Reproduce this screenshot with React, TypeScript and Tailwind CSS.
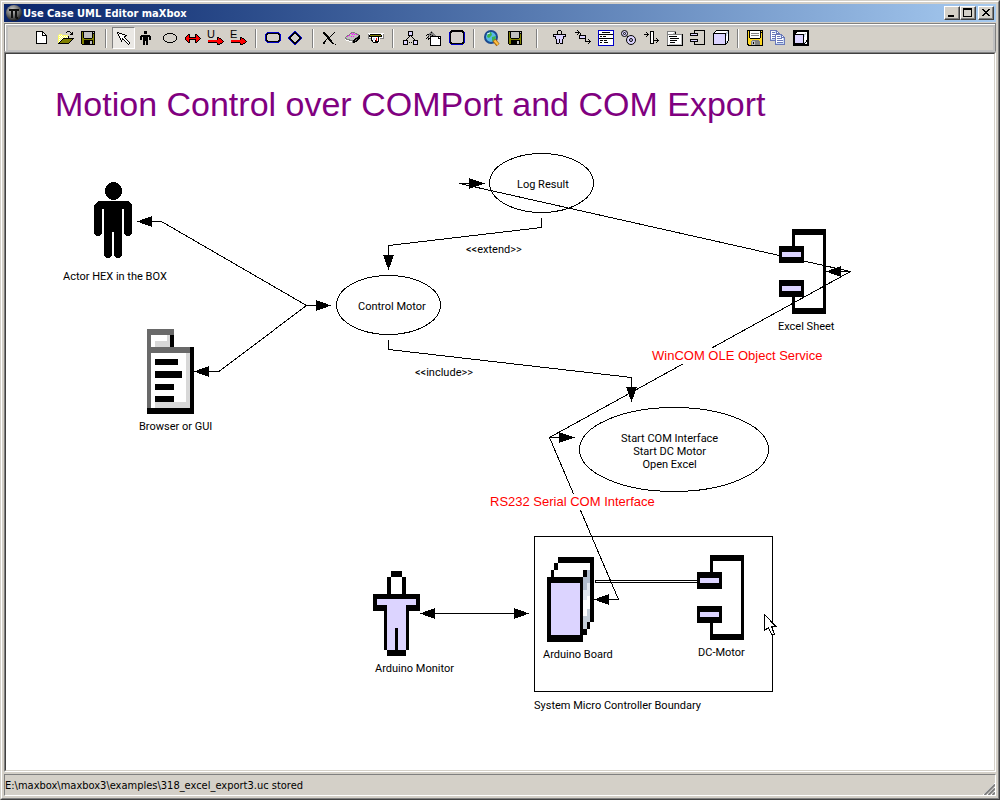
import React from "react";

const COLORS: Record<string, string> = {
  K: "#000000",
  W: "#ffffff",
  O: "#808000",
  Y: "#ffff66",
  G: "#c0c0c0",
  D: "#808080",
  R: "#ff0000",
  B: "#0000c8",
  L: "#dcd4ff",
  M: "#ff00ff",
  S: "#ffd820",
  P: "#6a78b8",
  C: "#c4d8f4",
};

/* Draws a bitmap given as rows of colour letters; dots are transparent. */
function Bitmap({ rows, x = 0, y = 0 }: { rows: string[]; x?: number; y?: number }) {
  const cells: React.ReactNode[] = [];
  rows.forEach((row, r) => {
    let c = 0;
    while (c < row.length) {
      let end = c + 1;
      while (end < row.length && row[end] === row[c]) end++;
      const fill = COLORS[row[c]];
      if (fill) {
        cells.push(<rect key={`${r}-${c}`} x={x + c} y={y + r} width={end - c} height={1} fill={fill} />);
      }
      c = end;
    }
  });
  return <>{cells}</>;
}

const NEW = [
  "KKKKKKK....",
  "KWWWWWKK...",
  "KWWWWWKWK..",
  "KWWWWWKWWK.",
  "KWWWWWKKKKK",
  "KWWWWWWWWWK",
  "KWWWWWWWWWK",
  "KWWWWWWWWWK",
  "KWWWWWWWWWK",
  "KWWWWWWWWWK",
  "KWWWWWWWWWK",
  "KWWWWWWWWWK",
  "KKKKKKKKKKK",
];
const OPEN = [
  ".........KKK....",
  "........K...K.K.",
  ".............KK.",
  ".YYY........KKK.",
  "YWYWYYYYYY......",
  "YYWYWYWYWYK.....",
  "YWYWYWYWYWK.....",
  "YYWYWKKKKKKKKKKK",
  "YWYWKOOOOOOOOOK.",
  "YYWKOOOOOOOOOK..",
  "YWKOOOOOOOOOK...",
  "YKOOOOOOOOOK....",
  "KKKKKKKKKKK.....",
];
const SAVE = [
  "KKKKKKKKKKKKKK",
  "KOKGGGGGGGGKGK",
  "KOKGGGGGGGGKKK",
  "KOKGGGGGGGGKOK",
  "KOKGGGGGGGGKOK",
  "KOKGGGGGGGGKOK",
  "KOKGGGGGGGGKOK",
  "KOOKKKKKKKKOOK",
  "KOOOOOOOOOOOOK",
  "KOOKKKKKKKKKOK",
  "KOOKKKKKKGGKOK",
  "KOOKKKKKKGGKOK",
  "KOOKKKKKKGGKOK",
  ".KKKKKKKKKKKKK",
];
const POINTER = [
  "KK............",
  "KWKKK.........",
  ".KWWWKKK......",
  ".KWWWWWWKK....",
  "..KWWWWKK.....",
  "..KWWWWK......",
  "...KWKWWK.....",
  "...KWKKWWK....",
  "....K..KWWK...",
  "....K...KWWK..",
  ".........KWWK.",
  "..........KWK.",
  "...........K..",
];
const ACTOR = [
  "....KKK....",
  "....KKK....",
  "....KKK....",
  "...........",
  ".KKKKKKKKK.",
  "KKKKKKKKKKK",
  "KK.KKKKK.KK",
  "KK.KKKKK.KK",
  "KK.KKKKK.KK",
  "...KKKKK...",
  "...KK.KK...",
  "...KK.KK...",
  "...KK.KK...",
  "...KK.KK...",
];
const BOTH = [
  "...KK.....KK....",
  "..KRK.....KRK...",
  ".KRRK.....KRRK..",
  "KRRRKKKKKKKRRRK.",
  "KRRRRRRRRRRRRRRK",
  "KRRRKKKKKKKRRRK.",
  ".KRRK.....KRRK..",
  "..KRK.....KRK...",
  "...KK.....KK....",
];
const RED = [
  ".........KK.....",
  ".........KRKK...",
  ".........KRRRK..",
  "RRRRRRRRRRRRRRK.",
  "RRRRRRRRRRRRRRRK",
  "KKKKKKKKKRRRRRK.",
  ".........KRRKK..",
  ".........KKK....",
];
const ROUND = [
  "..BBBBBBBBBBBB..",
  ".BKKKKKKKKKKKKB.",
  "BKK..........KKB",
  "BK............KB",
  "BK............KB",
  "BK............KB",
  "BK............KB",
  "BK............KB",
  "BKK..........KKB",
  ".BKKKKKKKKKKKKB.",
  "..BBBBBBBBBBBB..",
];
const SQUARE = [
  "..KKKKKKKKKKKK..",
  ".KKKKKKKKKKKKKK.",
  "BKK..........KKB",
  "BK............KB",
  "BK............KB",
  "BK............KB",
  "BK............KB",
  "BK............KB",
  "BK............KB",
  "BK............KB",
  "BK............KB",
  "BK............KB",
  "BKK..........KKB",
  ".KKKKKKKKKKKKKK.",
  "..BBBBBBBBBBBB..",
];
const DIAMOND = [
  "......BB......",
  ".....BKKB.....",
  "....BKKKKB....",
  "...BKK..KKB...",
  "..BKK....KKB..",
  ".BKK......KKB.",
  "BKK........KKB",
  "BKK........KKB",
  ".BKK......KKB.",
  "..BKK....KKB..",
  "...BKK..KKB...",
  "....BKKKKB....",
  ".....BKKB.....",
  "......BB......",
];
const CROSS = [
  "KK.........K.",
  "KKK.......K..",
  ".KKK.....K...",
  "..KKK...K....",
  "...KKK.K.....",
  "....KKK......",
  "....KKK......",
  "...K.KKK.....",
  "..K...KKK....",
  ".KK....KK....",
  "KK......KK...",
  "KK.......KK..",
  "............K",
];
const ERASER = [
  "......DDDD......",
  ".....DMGMGDDG...",
  "....DGGMGMGMDD..",
  "..DDMGGGGGGGGDK.",
  ".DMGGGMGMGGGGKK.",
  "DGGGGGGGGGGDKKK.",
  "DDGGGGGGGGKKKKK.",
  "WDDDDGGGGKKDKK..",
  ".WWWDDDDKKDKK...",
  "....WWWDKKKK....",
  ".......DKK......",
];
const PRINTER = [
  "WWWWWWWWWWWWWWWW",
  "DWKKKKKKKKKKKWWD",
  "DKOOOOOOOOOOOKWD",
  "DKKKKKKKKKKKKKWD",
  "DWWKWWWWWWKWWWWD",
  "DDDKWCCWRWKWDDDD",
  "...KWCCWRWKW....",
  "...KKWWKRWKW....",
  "....KWWKKKKW....",
  ".....KKKKKW.....",
];
const TREE = [
  ".....KKKKK.....",
  ".....KLLLK.....",
  ".....KLLLK.....",
  ".....KLLLK.....",
  ".....KKKKK.....",
  "......K.K......",
  ".....K...K.....",
  "....K.....K....",
  "...K.......K...",
  "KKKKK.....KKKKK",
  "KLLLK.....KLLLK",
  "KLLLK.K.K.KLLLK",
  "KLLLK.....KLLLK",
  "KKKKK.....KKKKK",
];
const SHEET = [
  ".....D.........",
  "....DKD........",
  "...DDDDD.......",
  ".KKDKDDDD......",
  "K.DDDDKDDD.....",
  "..K.KKKKKKKKKKK",
  ".KD.KWWWWWWWKWK",
  "K.KKKWWWWWWWKKK",
  "..K.KWWWWWWWWWK",
  "....KWWWWWWWWWK",
  "....KWWWWWWWWWK",
  "....KWWWWWWWWWK",
  "....KWWWWWWWWWK",
  "....KWWWWWWWWWK",
  "....KKKKKKKKKKK",
];
const FIGURE = [
  ".....KKK.....",
  "....K...K....",
  "....K...K....",
  "....K...K....",
  "KKKKKKKKKKKKK",
  "KLLLLLLLLLLLK",
  "KKKLLLLLLLKKK",
  "..KLLLLLLLK..",
  "..KLLLLLLLK..",
  "...KLLKLLK...",
  "...KLLKLLK...",
  "...KLLKLLK...",
  "...KLLKLLK...",
  "...KKK.KKK...",
];
const FLOW = [
  "..K.............",
  "...K............",
  "KKKKK...........",
  "...K.K..........",
  "..K..K..........",
  "....KKKKKKK.....",
  "....KLLLLLK.....",
  "....KLLLLLK.....",
  "....KKKKKKK.....",
  "..........K..K..",
  "..........K...K.",
  "..........KKKKKK",
  "..............K.",
  ".............K..",
];
const FORM = [
  "BBBBBBBBBBBBBBBB",
  "BWWWWWWWWWWWWWWB",
  "BWWWKKKKKKKKWWWB",
  "BWWWWWWWWWWWWWWB",
  "BKKKKKKKKKKKKKKB",
  "BWWWWWWWWWWWWWWB",
  "BWKKWKKKWWWWWWWB",
  "BWWWWWWWWWWWWWWB",
  "BKKKKKKKKKKKKKKB",
  "BWWWWWWWWWWWWWWB",
  "BWKKKWKKKWWWWWWB",
  "BWWWWWWWWWWWWWWB",
  "BWKKWWKKKKWWWWWB",
  "BWWWWWWWWWWWWWWB",
  "BWWWWWWWWWWWWWWB",
  "BBBBBBBBBBBBBBBB",
];
const BRIDGE = [
  "......KKKK......",
  "..K...KWWK......",
  "...K..KWWK......",
  "KKKKK.KWWK......",
  "...K..KWWK......",
  "..K...KWWK......",
  "......KWWK......",
  "......KWWK..K...",
  "......KWWK...K..",
  "......KWWKKKKKK.",
  "......KWWK...K..",
  "......KWWK..K...",
  "......KKKK......",
];
const PACKAGE = [
  "DDDDDDDDD.......",
  "DWWWWWWGK.......",
  "DWWWWWGGK.......",
  "DDDDDDDDDDDDDDDK",
  "DWWWWWWWWWWWWWGK",
  "DWKKKKKKKKWWWWGK",
  "DWWWWWWWWWWWWWGK",
  "DWWKKKKKKKKKWWGK",
  "DWWWWWWWWWWWWWGK",
  "DWWKKKKKKKWWWWGK",
  "DWWWWWWWWWWWWWGK",
  "DWWKKKKKWWWWWWGK",
  "DWWWWWWWWWWWWWGK",
  "DWGGGGGGGGGGGGGK",
  "KKKKKKKKKKKKKKKK",
];
const COMPONENT = [
  "....KKKKKKKKKKK",
  "....K.........K",
  "....K.........K",
  "KKKKKKKK......K",
  "KLLLLLLK......K",
  "KKKKKKKK......K",
  "..............K",
  "..............K",
  "..............K",
  "KKKKKKKK......K",
  "KLLLLLLK......K",
  "KKKKKKKK......K",
  "....K.........K",
  "....K.........K",
  "....KKKKKKKKKKK",
];
const CUBE = [
  "...KKKKKKKKKKKKK",
  "..KWWWWWWWWWWWGK",
  ".KWWWWWWWWWWWGCK",
  "KKKKKKKKKKKKKGCK",
  "KLLLLLLLLLLLKCWK",
  "KLLLLLLLLLLLKCWK",
  "KLLLLLLLLLLLKWWK",
  "KLLLLLLLLLLLKWWK",
  "KLLLLLLLLLLLKWWK",
  "KLLLLLLLLLLLKWWK",
  "KLLLLLLLLLLLKWWK",
  "KLLLLLLLLLLLKCK.",
  "KLLLLLLLLLLLKCK.",
  "KLLLLLLLLLLLKK..",
  "KKKKKKKKKKKKK...",
];
const DARK_CUBE = [
  "KKKKKKKKKKKKKKKK",
  "KKKKKKKKKKKKKKKK",
  "KKKKWWWWWWWWWWKK",
  "KKKWWWWWWWWWGWKK",
  "KKKKKKKKKKKGCWKK",
  "KKLLLLLLLLKCWWKK",
  "KKLLLLLLLLKCWWKK",
  "KKLLLLLLLLKWWWKK",
  "KKLLLLLLLLKWWWKK",
  "KKLLLLLLLLKWWWKK",
  "KKLLLLLLLLKWWKKK",
  "KKLLLLLLLLKWWKKK",
  "KKLLLLLLLLKCKWKK",
  "KKKKKKKKKKKKWWKK",
  "KKKKKKKKKKKKKKKK",
  "KKKKKKKKKKKKKKKK",
];
const FLOPPY = [
  "KKKKKKKKKKKKKKKK",
  "KSKWWWWWWWWWWKSK",
  "KSKWWWWWWWWWWKKK",
  "KSKWDDDDDDDDWKSK",
  "KSKWWWWWWWWWWKSK",
  "KSKWDDDDDDDDWKSK",
  "KSKWWWWWWWWWWKSK",
  "KSKWWWWWWWWWWKSK",
  "KSSKKKKKKKKKKSSK",
  "KSSSSSSSSSSSSSSK",
  "KSSSSDDDDDDDSSSK",
  "KSSSDGGGDDDDDSSK",
  "KSSSDGKGDDDDDSSK",
  "KSSSDGKGDDDDDSSK",
  "KKSSDGGGDDDDDSSK",
  ".KKKKKKKKKKKKKKK",
];
const COPY = [
  "PPPPPPP.........",
  "PWWWWCPP........",
  "PWPPPCPWP.......",
  "PWWWWWPPPP......",
  "PWPPPPPPPPPP....",
  "PWWWWPWWWWCPP...",
  "PWPPPPWPPPCPWP..",
  "PWWWWPWWWWWPPPP.",
  "PWPPPPWPPPPPWCP.",
  "PCCCCPWWWWWWWCP.",
  "PPPPPPWPPPPPPCP.",
  ".....PWWWWWWWCP.",
  ".....PWPPPPPPCP.",
  ".....PCCCCCCCCP.",
  ".....PPPPPPPPPP.",
];

const LETTER = "font-['Liberation_Sans',sans-serif] text-[11px]";

type Item = { label: string; art: React.ReactNode; pressed?: boolean };

const GROUPS: { gap: string; items: Item[] }[] = [
  {
    gap: "w-3",
    items: [
      { label: "New", art: <Bitmap rows={NEW} x={1} y={1} /> },
      { label: "Open", art: <Bitmap rows={OPEN} x={0} y={1} /> },
      { label: "Save", art: <Bitmap rows={SAVE} x={0} y={1} /> },
    ],
  },
  {
    gap: "w-[11px]",
    items: [
      { label: "Select", art: <Bitmap rows={POINTER} x={1} y={2} />, pressed: true },
      { label: "Actor", art: <Bitmap rows={ACTOR} x={1} y={1} /> },
      {
        label: "Use case",
        art: <ellipse cx={8} cy={8} rx={6.5} ry={4.5} fill="none" stroke="#000" />,
      },
      { label: "Association", art: <Bitmap rows={BOTH} x={0} y={4} /> },
      {
        label: "Uses",
        art: (
          <>
            <text x={-1} y={8} className={LETTER}>U</text>
            <Bitmap rows={RED} x={0} y={7} />
          </>
        ),
      },
      {
        label: "Extends",
        art: (
          <>
            <text x={-1} y={8} className={LETTER}>E</text>
            <Bitmap rows={RED} x={0} y={7} />
          </>
        ),
      },
    ],
  },
  {
    gap: "w-[11px]",
    items: [
      { label: "State", art: <Bitmap rows={ROUND} x={0} y={2} /> },
      { label: "Decision", art: <Bitmap rows={DIAMOND} x={0} y={1} /> },
    ],
  },
  {
    gap: "w-3",
    items: [
      { label: "Delete", art: <Bitmap rows={CROSS} x={1} y={2} /> },
      { label: "Erase", art: <Bitmap rows={ERASER} x={0} y={2} /> },
      { label: "Print", art: <Bitmap rows={PRINTER} x={0} y={3} /> },
    ],
  },
  {
    gap: "w-3",
    items: [
      { label: "Hierarchy", art: <Bitmap rows={TREE} x={0} y={1} /> },
      { label: "Properties", art: <Bitmap rows={SHEET} x={0} y={1} /> },
      { label: "Boundary", art: <Bitmap rows={SQUARE} x={0} y={0} /> },
    ],
  },
  {
    gap: "w-[22px]",
    items: [
      {
        label: "Browse",
        art: (
          <g shapeRendering="auto">
            <circle cx={7} cy={7} r={6} fill="#58b8e8" stroke="#1c4a90" strokeWidth={2} />
            <path d="M4 3l3-1 1 3-3 3-2-1zM8 7l4-1-1 4-3 1z" fill="#3cb44c" />
            <path d="M3 4l3-1" stroke="#d8f4ff" />
            <path d="M10 10l4 5" stroke="#a86810" strokeWidth={4} />
            <path d="M10.500 10.500l3.500 4" stroke="#ffc040" strokeWidth={2} />
          </g>
        ),
      },
      { label: "Save diagram", art: <Bitmap rows={SAVE} x={1} y={1} /> },
    ],
  },
  {
    gap: "w-[11px]",
    items: [
      { label: "Interface", art: <Bitmap rows={FIGURE} x={1} y={0} /> },
      { label: "Flow", art: <Bitmap rows={FLOW} x={0} y={0} /> },
      { label: "Class", art: <Bitmap rows={FORM} x={0} y={0} /> },
      {
        label: "Collaboration",
        art: (
          <g shapeRendering="auto" stroke="#000" fill="#dcd4ff">
            <circle cx={3.5} cy={3.5} r={3} />
            <circle cx={3.5} cy={3.5} r={1} />
            <path d="M6 6l2 2" />
            <circle cx={10} cy={10} r={4.5} />
            <circle cx={10} cy={10} r={1.5} />
          </g>
        ),
      },
      { label: "Sequence", art: <Bitmap rows={BRIDGE} x={0} y={1} /> },
      { label: "Package", art: <Bitmap rows={PACKAGE} x={0} y={1} /> },
      { label: "Component", art: <Bitmap rows={COMPONENT} x={0} y={0} /> },
      { label: "Node", art: <Bitmap rows={CUBE} x={0} y={0} /> },
    ],
  },
  {
    gap: "",
    items: [
      { label: "Save as", art: <Bitmap rows={FLOPPY} x={0} y={0} /> },
      { label: "Copy", art: <Bitmap rows={COPY} x={0} y={0} /> },
      { label: "Deployment", art: <Bitmap rows={DARK_CUBE} x={0} y={0} /> },
    ],
  },
];

function ToolButton({ item }: { item: Item }) {
  const base = "flex h-[22px] w-[23px] items-center pl-[3px] border";
  const look = item.pressed
    ? "border-t-[#808080] border-l-[#808080] border-r-white border-b-white bg-[#eae8e4]"
    : "border-transparent";
  return (
    <button type="button" aria-label={item.label} aria-pressed={item.pressed} className={`${base} ${look}`}>
      <svg width={16} height={16} viewBox="0 0 16 16" shapeRendering="crispEdges" className="shrink-0 overflow-visible">
        {item.art}
      </svg>
    </button>
  );
}

function Toolbar() {
  return (
    <div className="border border-[#808080] border-b-[#c0c0c0]">
      <div className="border-t border-l border-white">
        <div className="border-x-2 border-t-2 border-b border-[#c0c0c0]">
          <div role="toolbar" className="flex h-[23px] pl-[23px]">
            {GROUPS.map((group, i) => (
              <div key={i} className="flex">
                {group.items.map((item) => (
                  <ToolButton key={item.label} item={item} />
                ))}
                {group.gap && (
                  <div className={`flex justify-center py-[2px] ${group.gap}`}>
                    <div className="w-[2px] border-r border-l border-r-white border-l-[#808080]" />
                  </div>
                )}
              </div>
            ))}
          </div>
        </div>
      </div>
    </div>
  );
}

function CaptionButton({ label, children }: { label: string; children: React.ReactNode }) {
  return (
    <button
      type="button"
      aria-label={label}
      className="h-[14px] w-4 border border-t-white border-l-white border-r-[#404040] border-b-[#404040] bg-[#d4d0c8]"
    >
      <span className="flex h-full border-r border-b border-[#808080]">
        <svg width={13} height={11} viewBox="0 0 13 11" shapeRendering="crispEdges">
          {children}
        </svg>
      </span>
    </button>
  );
}

function TitleBar() {
  return (
    <header className="flex h-[18px] items-center bg-linear-to-r from-[#0a246a] to-[#a6caf0] px-[2px]">
      <svg width={16} height={16} viewBox="0 0 16 16">
        <defs>
          <radialGradient id="orb" cx="0.4" cy="0.3" r="0.7">
            <stop offset="0" stopColor="#c8c8c8" />
            <stop offset="0.6" stopColor="#686868" />
            <stop offset="1" stopColor="#202020" />
          </radialGradient>
        </defs>
        <circle cx={8} cy={8} r={8} fill="url(#orb)" />
        <path d="M3 5h10M6 5v8M10 5v7q0 1 2 1" fill="none" stroke="#101010" strokeWidth={2} />
      </svg>
      <h1 className="ml-px flex-1 pt-px font-['DejaVu_Sans_Condensed','DejaVu_Sans',sans-serif] text-[11px] leading-[17px] font-bold whitespace-nowrap text-white">
        Use Case UML Editor maXbox
      </h1>
      <div className="flex">
        <CaptionButton label="Minimize">
          <rect x={3} y={8} width={6} height={2} />
        </CaptionButton>
        <CaptionButton label="Maximize">
          <path d="M2 1h9v9h-9zM3 3v6h7v-6z" fillRule="evenodd" />
        </CaptionButton>
        <span className="w-[2px]" />
        <CaptionButton label="Close">
          <Bitmap
            x={3}
            y={2}
            rows={["KK....KK", ".KK..KK.", "..KKKK..", "...KK...", "..KKKK..", ".KK..KK.", "KK....KK"]}
          />
        </CaptionButton>
      </div>
    </header>
  );
}

function ComponentSymbol({ dx = 0, dy = 0 }: { dx?: number; dy?: number }) {
  return (
    <g transform={`translate(${dx} ${dy})`}>
      <path d="M792 229h34v85h-34v-20h3v14h28v-73h-28v14h-3z" />
      <path d="M779 246h25v17h-25zM779 280h25v17h-25z" />
      <path d="M782 252h19v5h-19zM782 286h19v5h-19z" fill="#dcd4ff" />
    </g>
  );
}

function Drawing() {
  return (
    <svg
      width={988}
      height={716}
      viewBox="6 54 988 716"
      shapeRendering="crispEdges"
      className="absolute top-0 left-0"
      aria-hidden="true"
    >
      <g fill="none" stroke="#000">
        <rect x={534.5} y={536.5} width={238} height={155} />
        <ellipse cx={541.5} cy={183} rx={52} ry={29.5} />
        <ellipse cx={388.5} cy={305} rx={52} ry={29.5} />
        <ellipse cx={674} cy={449.5} rx={94.5} ry={42} />
        <path d="M137 221.500H161.500L306.500 305.500H331" />
        <path d="M306.500 305.500L219 371.500H194" />
        <path d="M541.500 218V227.500L388.500 245.500V270" />
        <path d="M388.500 340V349.500L631.500 377.500V402" />
        <path d="M485 183.500H459.500L850.500 271.500H826" />
        <path d="M850.500 271.500L549.500 437.500H575" />
        <path d="M549.500 437.500L618.500 599.500H594" />
        <path d="M420 613.500H529" />
        <path d="M698 580.500H595.500V582.500H698" />
      </g>

      <g>
        <path d="M137 221.500L152 216V227z" />
        <path d="M331 305.500L316 300V311z" />
        <path d="M194 371.500L209 366V377z" />
        <path d="M388.500 270L383 255H394z" />
        <path d="M631.500 402L626 387H637z" />
        <path d="M485 183.500L469 178V189z" />
        <path d="M826 271.500L841 266V277z" />
        <path d="M575 437.500L559 432V443z" />
        <path d="M594 599.500L609 594V605z" />
        <path d="M420 613.500L435 608V619z" />
        <path d="M529 613.500L514 608V619z" />
      </g>

      <g>
        <ellipse cx={113.5} cy={191} rx={8.5} ry={9} />
        <path d="M98 201H128L132 205V233L130 236H126L124 233V209H122V255L120 258H116L114 255V232H112V255L110 258H106L104 255V209H102V233L100 236H96L94 233V205z" />
      </g>

      <g>
        <path d="M147 329h27v18h20v67h-47z" />
        <path d="M151 335h19v12h-19zM151 353h39v55h-39z" fill="#fff" />
        <path d="M147 329h27v6h-23v12h39v6h-39v55h-4z" fill="#696969" />
        <path d="M167 335h3v12h-15v-6h12zM186 353h4v55h-35v-6h31z" fill="#d8d8d8" />
        <path d="M155 359h23v6h-23zM155 371h27v7h-27zM155 384h19v6h-19zM155 396h19v6h-19z" />
      </g>

      <ComponentSymbol />
      <ComponentSymbol dx={-82} dy={326} />

      <g>
        <path d="M391 571h11v6h4v17h14v17h-11v39h-3v6h-19v-6h-3v-39h-11v-17h14v-17h4z" />
        <path d="M391 577h11v17h-11z" fill="#fff" />
        <path d="M377 599h39v6h-10v45h-8v-22h-3v22h-8v-45h-10z" fill="#dcd4ff" />
      </g>

      <g>
        <path d="M558 557h36v65h-4v7h-3v6h-4v7h-36v-65h4v-7h3v-7h4z" />
        <path d="M558 563h32v7h-7v7h-29v-7h4z" fill="#fff" />
        <path d="M583 577h4v-7h3v52h-3v7h-4z" fill="#fff" />
        <path d="M587 570h3v13h-3v7h-4v-13h4z" fill="#b0bccc" />
        <path d="M587 583h3v13h-3v4h-4v-10h4z" fill="#e0e6ee" />
        <path d="M583 616h4v-7h3v13h-3v7h-4z" fill="#c4ced8" />
        <path d="M551 583h29v52h-29z" fill="#dcd4ff" />
      </g>

      <path
        d="M764.500 614.500V630.500L768.500 627.500L771.500 634.500H774.500L771.500 626.500H776z"
        fill="#fff"
        stroke="#000"
      />
    </svg>
  );
}

const LABELS: { text: string; place: string }[] = [
  { text: "Log Result", place: "left-[511px] top-[124px]" },
  { text: "Actor HEX in the BOX", place: "left-[57px] top-[216px]" },
  { text: "<<extend>>", place: "left-[460px] top-[189px]" },
  { text: "Control Motor", place: "left-[352px] top-[246px]" },
  { text: "Excel Sheet", place: "left-[772px] top-[266px]" },
  { text: "<<include>>", place: "left-[409px] top-[312px]" },
  { text: "Browser or GUI", place: "left-[133px] top-[366px]" },
  { text: "Arduino Board", place: "left-[537px] top-[594px]" },
  { text: "DC-Motor", place: "left-[692px] top-[592px]" },
  { text: "Arduino Monitor", place: "left-[369px] top-[608px]" },
  { text: "System Micro Controller Boundary", place: "left-[528px] top-[645px]" },
];

function Canvas() {
  return (
    <main className="relative min-h-[716px] flex-1 overflow-hidden bg-white font-['Liberation_Sans',Arial,sans-serif] text-black">
      <Drawing />
      <h2 className="absolute top-[30px] left-[49px] text-[34px] leading-[40px] whitespace-nowrap text-[#800080]">
        Motion Control over COMPort and COM Export
      </h2>
      {LABELS.map((l) => (
        <span
          key={l.text}
          className={`absolute font-['Roboto',sans-serif] text-[11px] leading-[13px] whitespace-nowrap ${l.place}`}
        >
          {l.text}
        </span>
      ))}
      <p className="absolute top-[378px] left-[615px] text-center font-['Roboto',sans-serif] text-[11px] leading-[13px] whitespace-nowrap">
        Start COM Interface
        <br />
        Start DC Motor
        <br />
        Open Excel
      </p>
      <span className="absolute top-[294px] left-[646px] bg-white text-[13px] leading-[16px] whitespace-nowrap text-[#ff0000]">
        WinCOM OLE Object Service
      </span>
      <span className="absolute top-[440px] left-[484px] bg-white text-[13px] leading-[16px] whitespace-nowrap text-[#ff0000]">
        RS232 Serial COM Interface
      </span>
    </main>
  );
}

function StatusBar() {
  return (
    <footer className="mt-[2px] flex h-[22px] items-center justify-between border border-t-[#808080] border-l-[#808080] border-r-white border-b-white">
      <span className="pt-px font-['DejaVu_Sans_Condensed','DejaVu_Sans',sans-serif] text-[11px] leading-[19px] whitespace-nowrap">
        E:\maxbox\maxbox3\examples\318_excel_export3.uc stored
      </span>
      <svg width={12} height={12} viewBox="0 0 12 12" className="self-end">
        <path d="M0 12L12 0M4 12L12 4M8 12L12 8" stroke="#fff" />
        <path d="M1.500 12L12 1.500M5.500 12L12 5.500M9.500 12L12 9.500" stroke="#808080" strokeWidth={2} />
      </svg>
    </footer>
  );
}

export default function App() {
  return (
    <div className="flex min-h-screen flex-col border border-t-[#d4d0c8] border-l-[#d4d0c8] border-r-[#404040] border-b-[#404040] bg-[#d4d0c8]">
      <div className="flex flex-1 flex-col border border-t-white border-l-white border-r-[#808080] border-b-[#808080] p-[2px]">
        <TitleBar />
        <div className="mt-px flex flex-1 flex-col">
          <Toolbar />
          <div className="flex flex-1 flex-col border border-t-[#808080] border-l-[#808080] border-r-white border-b-white">
            <div className="flex flex-1 flex-col border border-t-[#404040] border-l-[#404040] border-r-[#d4d0c8] border-b-[#d4d0c8]">
              <Canvas />
            </div>
          </div>
          <StatusBar />
        </div>
      </div>
    </div>
  );
}
